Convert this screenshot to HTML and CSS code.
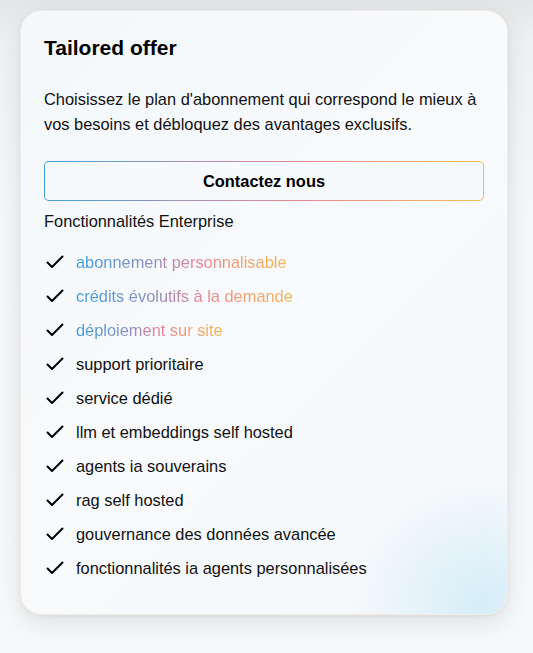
FILE: index.html
```html
<!DOCTYPE html>
<html lang="fr">
<head>
<meta charset="utf-8">
<link rel="stylesheet" href="styles.css">
</head>
<body>
<div class="page">
  <section class="card">
    <h2 class="title">Tailored offer</h2>
    <p class="desc">Choisissez le plan d'abonnement qui correspond le mieux à vos besoins et débloquez des avantages exclusifs.</p>
    <button class="cta">Contactez nous</button>
    <div class="features-label">Fonctionnalités Enterprise</div>
    <ul class="features">
      <li><svg class="check" viewBox="0 0 20 20"><path d="M2.5 10.5l4.5 4.5L17.5 4.5" /></svg><span class="grad">abonnement personnalisable</span></li>
      <li><svg class="check" viewBox="0 0 20 20"><path d="M2.5 10.5l4.5 4.5L17.5 4.5" /></svg><span class="grad">crédits évolutifs à la demande</span></li>
      <li><svg class="check" viewBox="0 0 20 20"><path d="M2.5 10.5l4.5 4.5L17.5 4.5" /></svg><span class="grad">déploiement sur site</span></li>
      <li><svg class="check" viewBox="0 0 20 20"><path d="M2.5 10.5l4.5 4.5L17.5 4.5" /></svg><span>support prioritaire</span></li>
      <li><svg class="check" viewBox="0 0 20 20"><path d="M2.5 10.5l4.5 4.5L17.5 4.5" /></svg><span>service dédié</span></li>
      <li><svg class="check" viewBox="0 0 20 20"><path d="M2.5 10.5l4.5 4.5L17.5 4.5" /></svg><span>llm et embeddings self hosted</span></li>
      <li><svg class="check" viewBox="0 0 20 20"><path d="M2.5 10.5l4.5 4.5L17.5 4.5" /></svg><span>agents ia souverains</span></li>
      <li><svg class="check" viewBox="0 0 20 20"><path d="M2.5 10.5l4.5 4.5L17.5 4.5" /></svg><span>rag self hosted</span></li>
      <li><svg class="check" viewBox="0 0 20 20"><path d="M2.5 10.5l4.5 4.5L17.5 4.5" /></svg><span>gouvernance des données avancée</span></li>
      <li><svg class="check" viewBox="0 0 20 20"><path d="M2.5 10.5l4.5 4.5L17.5 4.5" /></svg><span>fonctionnalités ia agents personnalisées</span></li>
    </ul>
  </section>
</div>
</body>
</html>
```
FILE: styles.css
```css
* { box-sizing: border-box; }
html, body {
  margin: 0;
  padding: 0;
  height: 100%;
}
body {
  font-family: "Liberation Sans", Arial, sans-serif;
  color: #111;
  background: linear-gradient(180deg, #e3e5e7 0px, #eef0f2 40px, #f4f6f8 200px, #f6f8fa 100%);
}
.page {
  padding: 10px 25px 0 20px;
}
.card {
  width: 488px;
  height: 605px;
  border-radius: 22px;
  border: 1px solid #f1ede6;
  background:
    radial-gradient(ellipse 130px 120px at 95% 98%, rgba(204, 234, 247, 0.75), rgba(220, 240, 248, 0) 100%),
    linear-gradient(135deg, #f4f8fb 0%, #f8fafc 50%, #f4f8fb 100%);
  box-shadow: 0 8px 24px rgba(0, 0, 0, 0.10), 0 1px 4px rgba(0, 0, 0, 0.05);
  padding: 26px 23px 20px 23px;
}
.title {
  margin: 0;
  font-size: 21px;
  font-weight: bold;
  line-height: 22px;
  color: #000;
}
.desc {
  margin: 28px 0 0;
  font-size: 16.4px;
  line-height: 25px;
  color: #111;
}
.cta {
  display: block;
  width: 100%;
  height: 40px;
  margin-top: 24px;
  font-family: inherit;
  font-size: 16.4px;
  font-weight: bold;
  color: #000;
  border: 1px solid transparent;
  border-radius: 5px;
  background:
    linear-gradient(#f7fafc, #f7fafc) padding-box,
    linear-gradient(90deg, #3ea2d6, #c98aa6 45%, #ec8d86 65%, #f2bc5a) border-box;
  cursor: pointer;
}
.features-label {
  margin-top: 9px;
  font-size: 16.4px;
  line-height: 22px;
}
.features {
  list-style: none;
  margin: 19px 0 0;
  padding: 0;
  display: flex;
  flex-direction: column;
  gap: 12px;
}
.features li {
  display: flex;
  align-items: center;
  height: 22px;
  font-size: 16.4px;
  line-height: 22px;
}
.check {
  width: 20px;
  height: 20px;
  margin: 0 11px 0 1px;
  fill: none;
  stroke: #000;
  stroke-width: 2;
  stroke-linecap: round;
  stroke-linejoin: round;
  flex: none;
}
.grad {
  background: linear-gradient(90deg, #3a9ddb 0%, #8a8fc0 35%, #e0809a 55%, #ef9a72 75%, #f2b64e 100%);
  -webkit-background-clip: text;
  background-clip: text;
  color: transparent;
}
```
